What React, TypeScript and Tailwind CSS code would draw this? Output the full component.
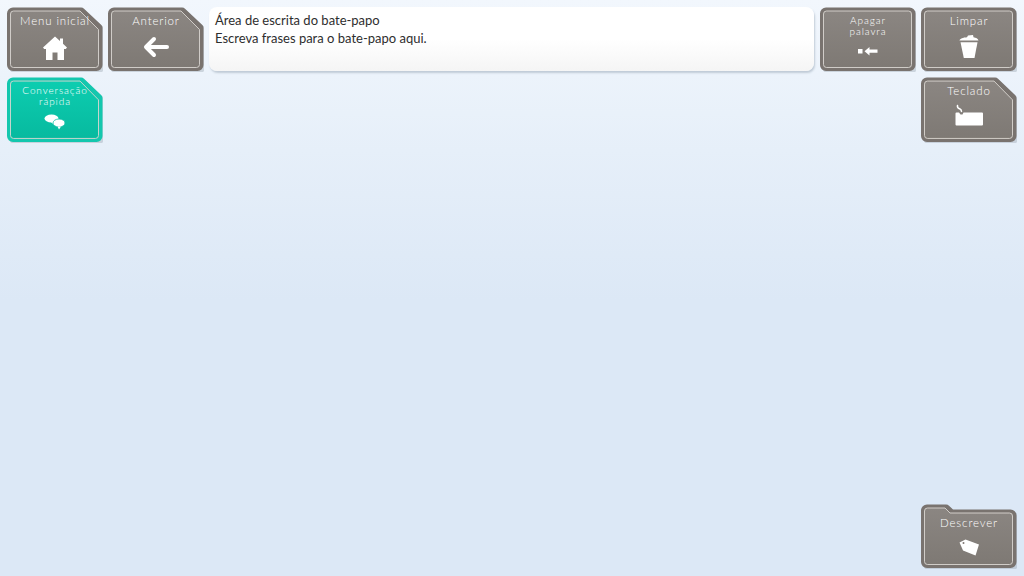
import React from "react";

type Shape = "chamfer" | "rect" | "folder";

function Frame({ shape, outer, inner, light, tall }: { shape: Shape; outer: string; inner: string; light: string; tall?: boolean }) {
  const o =
    shape === "chamfer"
      ? "M6 .5H74a4 4 0 0 1 3 1.200L94.300 18a4 4 0 0 1 1.200 3V58a6 6 0 0 1-6 6H6a6 6 0 0 1-6-6V6.500A6 6 0 0 1 6 .5Z"
      : shape === "folder"
        ? "M6 .5H25a4 4 0 0 1 3 1.200L32 5.500H89.500a6 6 0 0 1 6 6V58a6 6 0 0 1-6 6H6a6 6 0 0 1-6-6V6.500A6 6 0 0 1 6 .5Z"
        : "M6 .5H89.500a6 6 0 0 1 6 6V58a6 6 0 0 1-6 6H6a6 6 0 0 1-6-6V6.500A6 6 0 0 1 6 .5Z";
  const i =
    shape === "chamfer"
      ? "M6.500 4H73L91.500 22.500V57.500a3 3 0 0 1-3 3H6.500a3 3 0 0 1-3-3V7a3 3 0 0 1 3-3Z"
      : shape === "folder"
        ? "M6.500 4H24L29 9H88.500a3 3 0 0 1 3 3V57.500a3 3 0 0 1-3 3H6.500a3 3 0 0 1-3-3V7a3 3 0 0 1 3-3Z"
        : "M6.500 4H88.500a3 3 0 0 1 3 3V57.500a3 3 0 0 1-3 3H6.500a3 3 0 0 1-3-3V7a3 3 0 0 1 3-3Z";
  const id = `g-${shape}-${outer.slice(1)}`;
  return (
    <svg
      className="absolute left-0 top-0"
      width="96"
      height={tall ? 66 : 65}
      viewBox="0 0 96 65"
      preserveAspectRatio="none"
    >
      <defs>
        <linearGradient id={id} x1="0" y1="0" x2="0" y2="1">
          <stop offset="0" stopColor={light} />
          <stop offset="1" stopColor={inner} />
        </linearGradient>
      </defs>
      <path d={o} transform="translate(2 2)" fill="#8f9aa6" opacity="0.35" />
      <path d={o} fill={outer} />
      <path d={i} fill={`url(#${id})`} stroke="#d9d6d1" strokeWidth="0.9" />
    </svg>
  );
}

function GameButton({
  label,
  second,
  shape = "chamfer",
  teal,
  small,
  tall,
  folder,
  children,
}: {
  label: string;
  second?: string;
  shape?: Shape;
  teal?: boolean;
  small?: boolean;
  tall?: boolean;
  folder?: boolean;
  children: React.ReactNode;
}) {
  return (
    <div className="relative h-[65px] w-[96px] shrink-0">
      {teal ? (
        <Frame shape={shape} outer="#14c7ae" inner="#07ba9f" light="#0dcdb0" tall={tall} />
      ) : (
        <Frame shape={shape} outer="#79736f" inner="#7e7974" light="#8b8682" tall={tall} />
      )}
      <div
        className={`relative flex h-full w-full flex-col items-center text-center font-['Lato',sans-serif] font-light text-white ${
          small ? "text-[10px] leading-[11px] tracking-[0.9px]" : "text-[11.5px] leading-[14px] tracking-[0.85px]"
        } ${folder ? "pt-[12px]" : small ? "pt-[8px]" : "pt-[7px]"}`}
      >
        <span className="whitespace-nowrap">{label}</span>
        {second ? <span className="whitespace-nowrap">{second}</span> : null}
        {children}
      </div>
    </div>
  );
}

const Home = () => (
  <svg className="mt-[7px]" width="26" height="26" viewBox="0 0 26 26" fill="#fff">
    <path d="M13 1.500 18 6V3.500H21V8.800L25 12.500 23.800 14H22V25H15.500V17.500H10.500V25H4V14H2.200L1 12.500Z" />
  </svg>
);
const ArrowL = () => (
  <svg className="mt-[8px]" width="26" height="22" viewBox="0 0 26 22" fill="none" stroke="#fff" strokeLinecap="round" strokeLinejoin="round">
    <path d="M24 11H4" strokeWidth="4" />
    <path d="M11 3 3 11l8 8" strokeWidth="4" />
  </svg>
);
const Chat = () => (
  <svg className="mt-[7px]" width="22" height="16" viewBox="0 0 22 16" fill="#fff">
    <ellipse cx="7.500" cy="4.500" rx="7" ry="4" />
    <path d="M7 8 10 11l.5-3Z" />
    <ellipse cx="15" cy="9" rx="6" ry="4" stroke="#0cc0a6" strokeWidth="0.800" />
    <path d="M13.500 12.500 15 15.500l2-3Z" />
  </svg>
);
const Erase = () => (
  <svg className="mt-[9px]" width="20" height="10" viewBox="0 0 20 10" fill="#fff">
    <rect x="0" y="3" width="4.500" height="4.500" />
    <path d="M6.500 5.200 11.500 1V3.600H19.500V6.800H11.500V9.500Z" />
  </svg>
);
const Trash = () => (
  <svg className="mt-[5px]" width="20" height="26" viewBox="0 0 20 26" fill="#fff">
    <path d="M.5 7.500C1 5.500 4 4.500 8 4.200L9 2.500 14 2 14.500 4.300C17 4.700 19 5.800 19.500 7.500Z" />
    <path d="M1.500 9.200H18.500L15.500 25H4.800Z" />
  </svg>
);
const Keyboard = () => (
  <svg className="mt-[6px]" width="30" height="23" viewBox="0 0 30 23" fill="#fff">
    <path d="M3.500 1.500C3 3.500 4.500 4.500 6 5 7 5.500 7.500 6.500 7.500 7.500" fill="none" stroke="#fff" strokeWidth="1.500" strokeLinecap="round" />
    <path d="M2.500 8.500H5L6.500 10.500H8.500L9.500 8.500H28a1 1 0 0 1 1 1V20.500a1 1 0 0 1-1 1H2.500a1 1 0 0 1-1-1V9.500a1 1 0 0 1 1-1Z" />
  </svg>
);
const Tag = () => (
  <svg className="mt-[9px]" width="22" height="17" viewBox="0 0 22 17" fill="#fff">
    <path d="M1.500 3.500 7.500 .5 21 5.500 17.500 16.500 5 11.500Z" />
    <circle cx="5.500" cy="4" r="1" fill="#7f7873" />
  </svg>
);

export default function App() {
  return (
    <div className="flex h-[576px] w-[1024px] flex-col overflow-hidden bg-[linear-gradient(180deg,#f2f7fd_0%,#e6eff9_150px,#dce8f6_300px,#dce8f6_100%)] px-[7px] pb-[7px] pt-[7px]">
      <div className="flex items-start">
        <GameButton label="Menu inicial">
          <Home />
        </GameButton>
        <div className="ml-[5px]">
          <GameButton label="Anterior">
            <ArrowL />
          </GameButton>
        </div>
        <div className="ml-[5px] mr-[6px] h-[64px] flex-1 rounded-[8px] bg-[linear-gradient(180deg,#ffffff_0%,#ffffff_50%,#f5f5f5_100%)] pl-[6px] pt-[4px] font-['Lato',sans-serif] text-[13px] leading-[18px] text-[#2e2e2e] shadow-[1px_2px_2px_rgba(140,155,170,0.45)]">
          <div>Área de escrita do bate-papo</div>
          <div>Escreva frases para o bate-papo aqui.</div>
        </div>
        <GameButton label="Apagar" second="palavra" shape="rect" small>
          <Erase />
        </GameButton>
        <div className="ml-[5px]">
          <GameButton label="Limpar" shape="rect">
            <Trash />
          </GameButton>
        </div>
      </div>
      <div className="mt-[5px] flex items-start justify-between">
        <GameButton label="Conversação" second="rápida" teal small tall>
          <Chat />
        </GameButton>
        <GameButton label="Teclado" tall>
          <Keyboard />
        </GameButton>
      </div>
      <div className="mt-auto flex justify-end">
        <GameButton label="Descrever" shape="folder" folder>
          <Tag />
        </GameButton>
      </div>
    </div>
  );
}
